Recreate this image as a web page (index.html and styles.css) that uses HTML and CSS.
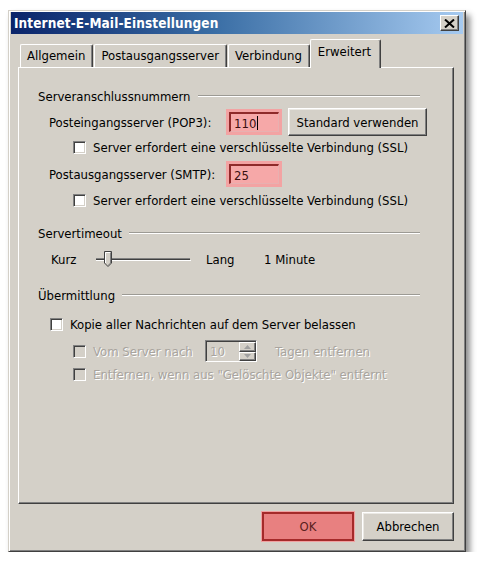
FILE: index.html
```html
<!DOCTYPE html>
<html lang="de">
<head>
  <meta charset="UTF-8">
  <title>Internet-E-Mail-Einstellungen</title>
  <link rel="stylesheet" href="styles.css">
</head>
<body>

  <div class="window">
    <!-- Title bar -->
    <div class="titlebar">
      <span class="title">Internet-E-Mail-Einstellungen</span>
      <button class="close-btn">
        <svg width="11" height="9" viewBox="0 0 11 9"><path d="M1 0.5 L10 8.5 M10 0.5 L1 8.5" stroke="#000" stroke-width="2"/></svg>
      </button>
    </div>

    <!-- Tabs -->
    <div class="tabs">
      <div class="tab">Allgemein</div>
      <div class="tab">Postausgangsserver</div>
      <div class="tab">Verbindung</div>
      <div class="tab active">Erweitert</div>
    </div>

    <div class="panel">
      <div class="group-head">Serveranschlussnummern</div>

      <div class="row row-pop">
        <span class="label">Posteingangsserver (POP3):</span>
        <span class="hl"><span class="field">110<i class="caret"></i></span></span>
        <button class="btn std-btn">Standard verwenden</button>
      </div>
      <div class="row row-check1">
        <span class="check"></span>
        <span>Server erfordert eine verschlüsselte Verbindung (SSL)</span>
      </div>

      <div class="row row-smtp">
        <span class="label">Postausgangsserver (SMTP):</span>
        <span class="hl"><span class="field">25</span></span>
      </div>
      <div class="row row-check2">
        <span class="check"></span>
        <span>Server erfordert eine verschlüsselte Verbindung (SSL)</span>
      </div>

      <div class="group-head head-timeout">Servertimeout</div>
      <div class="row row-slider">
        <span class="kurz">Kurz</span>
        <svg class="slider" width="96" height="22" viewBox="0 0 96 22">
          <path d="M0 10.5 H94" stroke="#808080" stroke-width="1"/>
          <path d="M0 11.5 H94" stroke="#404040" stroke-width="1"/>
          <path d="M0 12.5 H95" stroke="#ffffff" stroke-width="1"/>
          <path d="M8.5 3.5 H15.5 V15 L12 18.5 L8.5 15 Z" fill="#d4d0c8" stroke="#404040"/>
          <path d="M9.5 15 V4.5 H14.5" fill="none" stroke="#ffffff"/>
          <path d="M14.5 4.5 V15 L12 17.5" fill="none" stroke="#808080"/>
        </svg>
        <span class="lang">Lang</span>
        <span>1 Minute</span>
      </div>

      <div class="group-head head-uebermittlung">Übermittlung</div>
      <div class="row row-kopie">
        <span class="check"></span>
        <span>Kopie aller Nachrichten auf dem Server belassen</span>
      </div>
      <div class="row row-vom disabled">
        <span class="check"></span>
        <span class="vom-text">Vom Server nach</span>
        <span class="spin">
          <span class="spin-val">10</span>
          <span class="spin-btns">
            <span class="spin-btn">
              <svg width="7" height="4" viewBox="0 0 7 4"><path d="M3.5 0 L7 4 H0 Z" fill="#a0a0a0"/></svg>
            </span>
            <span class="spin-btn">
              <svg width="7" height="4" viewBox="0 0 7 4"><path d="M0 0 H7 L3.5 4 Z" fill="#a0a0a0"/></svg>
            </span>
          </span>
        </span>
        <span>Tagen entfernen</span>
      </div>
      <div class="row row-entf disabled">
        <span class="check"></span>
        <span>Entfernen, wenn aus "Gelöschte Objekte" entfernt</span>
      </div>
    </div>

    <!-- Dialog buttons -->
    <div class="dialog-buttons">
      <button class="btn ok-btn">OK</button>
      <button class="btn">Abbrechen</button>
    </div>
  </div>

</body>
</html>
```

FILE: styles.css
```css
/* Classic dialog look */
body {
  margin: 0;
  background-color: #ffffff;
  font-family: "DejaVu Sans Condensed", "DejaVu Sans", sans-serif;
  font-size: 13px;
  color: #000;
}

.window {
  margin: 10px 0 0 8px;
  width: 458px;
  height: 542px;
  box-sizing: border-box;
  background-color: #d4d0c8;
  border: 1px solid #404040;
  border-top-color: #d4d0c8;
  border-left-color: #d4d0c8;
  box-shadow: inset 1px 1px 0 #ffffff, inset -1px -1px 0 #808080, 4px 5px 6px rgba(0, 0, 0, 0.45);
  padding: 1px 2px;
}

.titlebar {
  height: 22px;
  background: linear-gradient(to right, #0a246a 0%, #3a6ea5 45%, #a6caf0 100%);
  display: flex;
  justify-content: space-between;
  align-items: center;
  padding: 0 4px 0 3px;
}

.title {
  color: #ffffff;
  font-weight: bold;
  font-size: 13.5px;
  letter-spacing: 0.1px;
}

.close-btn {
  width: 19px;
  height: 16px;
  padding: 0;
  background-color: #d4d0c8;
  border: 1px solid #404040;
  border-top-color: #ffffff;
  border-left-color: #ffffff;
  box-shadow: inset -1px -1px 0 #808080;
  display: flex;
  align-items: center;
  justify-content: center;
}

/* Tabs */
.tabs {
  display: flex;
  align-items: flex-end;
  height: 28px;
  margin-top: 5px;
  padding-left: 9px;
  position: relative;
  z-index: 1;
}

.tab {
  height: 23px;
  box-sizing: border-box;
  padding: 3px 7px 0 6px;
  border-left: 1px solid #ffffff;
  border-top: 1px solid #ffffff;
  border-right: 1px solid #404040;
  box-shadow: inset -1px 0 0 #808080;
  border-radius: 2px 2px 0 0;
  margin-right: 1px;
  white-space: nowrap;
}

.tab.active {
  height: 29px;
  padding: 4px 9px 0 7px;
  margin-left: -1px;
  margin-bottom: -1px;
  background-color: #d4d0c8;
}

.panel {
  margin: 0 9px 0 7px;
  height: 437px;
  box-sizing: border-box;
  border: 1px solid #404040;
  border-top-color: #ffffff;
  border-left-color: #ffffff;
  box-shadow: inset -1px -1px 0 #808080;
  padding: 20px 33px 0 19px;
}

/* Group headings with etched line */
.group-head {
  display: flex;
  align-items: center;
  height: 16px;
  white-space: nowrap;
}

.group-head::after {
  content: "";
  flex: 1;
  margin-left: 7px;
  border-top: 1px solid #9c9a94;
  border-bottom: 1px solid #ffffff;
}

.row {
  display: flex;
  align-items: center;
  white-space: nowrap;
}

.label {
  flex: 0 0 188px;
  min-width: 0;
  box-sizing: border-box;
  padding-left: 11px;
}

.row-pop { height: 28px; margin-top: 4px; }
.row-check1 { height: 16px; margin-top: 3px; padding-left: 35px; }
.row-smtp { height: 26px; margin-top: 6px; }
.row-check2 { height: 16px; margin-top: 5px; padding-left: 35px; }
.head-timeout { margin-top: 17px; }
.row-slider { height: 22px; margin-top: 7px; padding-left: 13px; }
.head-uebermittlung { margin-top: 17px; }
.row-kopie { height: 16px; margin-top: 13px; padding-left: 12px; }
.row-vom { height: 22px; margin-top: 8px; padding-left: 35px; }
.row-entf { height: 16px; margin-top: 4px; padding-left: 35px; }

/* Highlighted input fields */
.hl {
  flex: 0 0 56px;
  height: 26px;
  box-sizing: border-box;
  background-color: #f3a3a3;
  padding: 3px;
  display: flex;
}

.field {
  flex: 1;
  box-sizing: border-box;
  border-top: 2px solid #8e2a2a;
  border-left: 2px solid #8e2a2a;
  border-right: 1px solid #e8b0b0;
  border-bottom: 1px solid #e8b0b0;
  background-color: #f6a8a8;
  padding: 1px 0 0 3px;
  display: flex;
  align-items: center;
  color: #3a1010;
}

.caret {
  display: inline-block;
  width: 1px;
  height: 14px;
  background-color: #000;
  margin-left: 1px;
}

/* Buttons */
.btn {
  font-family: inherit;
  font-size: inherit;
  color: #000;
  background-color: #d4d0c8;
  border: 1px solid #404040;
  border-top-color: #ffffff;
  border-left-color: #ffffff;
  box-shadow: inset -1px -1px 0 #808080, inset 1px 1px 0 #ebe9e4;
  padding: 0;
}

.std-btn {
  flex: 0 0 139px;
  height: 28px;
  margin-left: 6px;
}

/* Checkboxes */
.check {
  width: 13px;
  height: 13px;
  box-sizing: border-box;
  background-color: #ffffff;
  border: 1px solid #ffffff;
  border-top-color: #808080;
  border-left-color: #808080;
  box-shadow: inset 1px 1px 0 #404040, inset -1px -1px 0 #d4d0c8;
  margin-right: 7px;
  flex-shrink: 0;
}

.disabled {
  color: #a8a49e;
  text-shadow: 1px 1px 0 #ffffff;
}

.disabled .check {
  background-color: #d4d0c8;
}

/* Slider */
.kurz {
  width: 45px;
}

.slider {
  margin-right: 14px;
}

.lang {
  width: 58px;
}

/* Spinner */
.vom-text {
  width: 112px;
}

.spin {
  width: 52px;
  height: 22px;
  box-sizing: border-box;
  border: 1px solid #ffffff;
  border-top-color: #808080;
  border-left-color: #808080;
  box-shadow: inset 1px 1px 0 #404040;
  display: flex;
  margin-right: 18px;
}

.spin-val {
  flex: 1;
  padding: 1px 0 0 4px;
  line-height: 19px;
}

.spin-btns {
  width: 17px;
  display: flex;
  flex-direction: column;
  padding: 1px 0 0 0;
}

.spin-btn {
  flex: 1;
  display: flex;
  align-items: center;
  justify-content: center;
  border: 1px solid #404040;
  border-top-color: #ffffff;
  border-left-color: #ffffff;
  box-shadow: inset -1px -1px 0 #808080;
}

/* Dialog buttons */
.dialog-buttons {
  display: flex;
  justify-content: flex-end;
  gap: 8px;
  margin-top: 8px;
  padding-right: 9px;
}

.dialog-buttons .btn {
  width: 92px;
  height: 29px;
}

.ok-btn {
  background-color: #e88080;
  border: 2px solid #a52a2a;
  box-shadow: 0 0 0 1px #f0a0a0;
  color: #5a2020;
}
```
